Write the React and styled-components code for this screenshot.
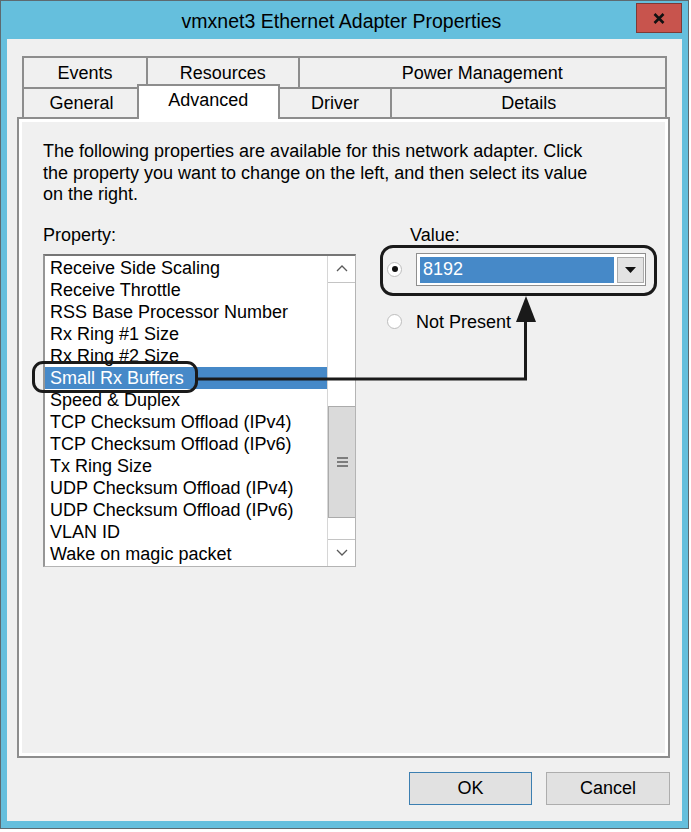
import React from "react";
import styled, { createGlobalStyle } from "styled-components";

const GlobalStyle = createGlobalStyle`
  html, body {
    margin: 0;
    padding: 0;
    background: #ffffff;
  }
  body {
    font-family: "Liberation Sans", Arial, sans-serif;
    color: #000;
  }
`;

const Window = styled.div`
  width: 689px;
  height: 829px;
  box-sizing: border-box;
  border: 1px solid #5d6a70;
  background: #65bfdd;
  padding: 0 6px 7px;
  display: flex;
  flex-direction: column;
`;

const TitleBar = styled.div`
  height: 38px;
  display: grid;
  grid-template-columns: 1fr auto 1fr;
  align-items: start;
`;

const Title = styled.div`
  grid-column: 2;
  font-size: 19.5px;
  line-height: 40px;
  padding-right: 6px;
  white-space: nowrap;
`;

const CloseButton = styled.div`
  grid-column: 3;
  justify-self: end;
  margin-top: 2px;
  width: 46px;
  height: 30px;
  box-sizing: border-box;
  border: 1px solid #7d3a36;
  background: #c8544d;
  display: flex;
  align-items: center;
  justify-content: center;
`;

const Client = styled.div`
  flex: 1;
  background: #f0f0f0;
  padding: 17px 12px 16px 10px;
  display: flex;
  flex-direction: column;
`;

const TabStrip = styled.div`
  margin: 0 3px 0 5px;
  display: flex;
  flex-direction: column;
`;

const TabRow = styled.div`
  display: flex;
  height: ${(p) => p.h}px;
`;

const Tab = styled.div`
  width: ${(p) => p.w}px;
  box-sizing: border-box;
  border-top: 2px solid #8d8d8d;
  border-left: ${(p) => (p.noLeft ? "none" : "2px solid #8d8d8d")};
  border-right: ${(p) => (p.last ? "2px solid #8d8d8d" : "none")};
  background: #f0f0f0;
  font-size: 18px;
  display: flex;
  align-items: center;
  justify-content: center;
  padding-top: 1px;
`;

const ActiveTab = styled.div`
  width: ${(p) => p.w}px;
  height: 35px;
  margin: -3px 0 -2px -2px;
  box-sizing: border-box;
  border: 2px solid #8d8d8d;
  border-bottom: none;
  background: #ffffff;
  position: relative;
  z-index: 2;
  font-size: 18px;
  display: flex;
  justify-content: center;
  padding-top: 4px;
`;

const Panel = styled.div`
  position: relative;
  height: 641px;
  box-sizing: border-box;
  border: 2px solid #8d8d8d;
  box-shadow: inset 0 0 0 3px #ffffff;
  padding: 22px 24px;
`;

const Description = styled.div`
  font-size: 18px;
  line-height: 21.5px;
`;

const Columns = styled.div`
  display: flex;
  margin-top: 18px;
`;

const LeftColumn = styled.div`
  width: 313px;
`;

const RightColumn = styled.div`
  margin-left: 31px;
  display: flex;
  flex-direction: column;
`;

const Label = styled.div`
  font-size: 18px;
  line-height: 22px;
  margin-left: ${(p) => p.indent || 0}px;
  margin-bottom: ${(p) => p.gap}px;
`;

const ListBox = styled.div`
  width: 313px;
  height: 313px;
  box-sizing: border-box;
  border: 1px solid #b4b4b4;
  border-top: 2px solid #767676;
  border-left: 2px solid #969696;
  background: #ffffff;
  display: flex;
`;

const Items = styled.div`
  flex: 1;
  padding-top: 1px;
`;

const Item = styled.div`
  height: 22px;
  line-height: 22px;
  padding-left: 5px;
  font-size: 18px;
  white-space: nowrap;
  background: ${(p) => (p.selected ? "#4689c8" : "transparent")};
  color: ${(p) => (p.selected ? "#ffffff" : "#000000")};
`;

const ScrollBar = styled.div`
  width: 27px;
  border-left: 1px solid #d6d6d6;
  display: flex;
  flex-direction: column;
`;

const ArrowButton = styled.div`
  height: 27px;
  box-sizing: border-box;
  border-top: ${(p) => (p.bottom ? "1px solid #c4c4c4" : "none")};
  border-bottom: ${(p) => (p.bottom ? "none" : "1px solid #c4c4c4")};
  display: flex;
  align-items: center;
  justify-content: center;
`;

const Track = styled.div`
  flex: 1;
  display: flex;
  flex-direction: column;
`;

const Thumb = styled.div`
  margin-top: ${(p) => p.offset}px;
  height: ${(p) => p.size}px;
  box-sizing: border-box;
  border: 1px solid #ababab;
  border-right: none;
  background: #dadada;
  display: flex;
  align-items: center;
  justify-content: center;
`;

const OptionRow = styled.div`
  display: flex;
  align-items: center;
  margin-top: ${(p) => p.top || 0}px;
`;

const Radio = styled.div`
  width: 15px;
  height: 15px;
  box-sizing: border-box;
  border-radius: 50%;
  border: 1px solid #bdbdbd;
  background: #ffffff;
  margin-right: 14px;
  display: flex;
  align-items: center;
  justify-content: center;

  &::after {
    content: "";
    display: ${(p) => (p.checked ? "block" : "none")};
    width: 6px;
    height: 6px;
    border-radius: 50%;
    background: #111111;
  }
`;

const OptionText = styled.div`
  font-size: 18px;
  line-height: 22px;
`;

const Combo = styled.div`
  width: 230px;
  height: 33px;
  box-sizing: border-box;
  border: 1px solid #8f8f8f;
  background: #ffffff;
  padding: 3px 1px 2px 3px;
  display: flex;
  gap: 3px;
`;

const ComboValue = styled.div`
  flex: 1;
  background: #4689c8;
  color: #ffffff;
  font-size: 18px;
  line-height: 25px;
  padding-left: 3px;
`;

const DropButton = styled.div`
  width: 27px;
  box-sizing: border-box;
  border: 1px solid #acacac;
  background: #e3e3e3;
  display: flex;
  align-items: center;
  justify-content: center;
`;

const Callout = styled.div`
  position: absolute;
  left: ${(p) => p.x}px;
  top: ${(p) => p.y}px;
  width: ${(p) => p.w}px;
  height: ${(p) => p.h}px;
  box-sizing: border-box;
  border: 3px solid #1a1a1a;
  border-radius: ${(p) => p.r}px;
  pointer-events: none;
`;

const Connector = styled.svg`
  position: absolute;
  left: 177px;
  top: 175px;
`;

const ButtonRow = styled.div`
  display: flex;
  justify-content: flex-end;
  gap: 14px;
  margin-top: 14px;
`;

const Button = styled.div`
  width: ${(p) => p.w}px;
  height: 33px;
  box-sizing: border-box;
  border: 1px solid ${(p) => (p.primary ? "#3c7fb1" : "#adadad")};
  background: #e1e1e1;
  font-size: 18px;
  display: flex;
  align-items: center;
  justify-content: center;
`;

const properties = [
  "Receive Side Scaling",
  "Receive Throttle",
  "RSS Base Processor Number",
  "Rx Ring #1 Size",
  "Rx Ring #2 Size",
  "Small Rx Buffers",
  "Speed & Duplex",
  "TCP Checksum Offload (IPv4)",
  "TCP Checksum Offload (IPv6)",
  "Tx Ring Size",
  "UDP Checksum Offload (IPv4)",
  "UDP Checksum Offload (IPv6)",
  "VLAN ID",
  "Wake on magic packet",
];

function Chevron({ down }) {
  return (
    <svg width="12" height="7" viewBox="0 0 12 7">
      <polyline
        points={down ? "1,1 6,6 11,1" : "1,6 6,1 11,6"}
        fill="none"
        stroke="#5a5a5a"
        strokeWidth="1.3"
      />
    </svg>
  );
}

export default function App() {
  return (
    <>
      <GlobalStyle />
      <Window>
        <TitleBar>
          <Title>vmxnet3 Ethernet Adapter Properties</Title>
          <CloseButton>
            <svg width="12" height="11" viewBox="0 0 12 11">
              <path d="M1.5 1 L10.5 10 M10.5 1 L1.5 10" stroke="#111" strokeWidth="2.6" />
            </svg>
          </CloseButton>
        </TitleBar>

        <Client>
          <TabStrip>
            <TabRow h={31}>
              <Tab w={124}>Events</Tab>
              <Tab w={152}>Resources</Tab>
              <Tab w={370} last>Power Management</Tab>
            </TabRow>
            <TabRow h={30}>
              <Tab w={117}>General</Tab>
              <ActiveTab w={143}>Advanced</ActiveTab>
              <Tab w={111} noLeft>Driver</Tab>
              <Tab w={277} last>Details</Tab>
            </TabRow>
          </TabStrip>

          <Panel>
            <Description>
              The following properties are available for this network adapter. Click
              <br />
              the property you want to change on the left, and then select its value
              <br />
              on the right.
            </Description>

            <Columns>
              <LeftColumn>
                <Label gap={8}>Property:</Label>
                <ListBox>
                  <Items>
                    {properties.map((name) => (
                      <Item key={name} selected={name === "Small Rx Buffers"}>
                        {name}
                      </Item>
                    ))}
                  </Items>
                  <ScrollBar>
                    <ArrowButton>
                      <Chevron />
                    </ArrowButton>
                    <Track>
                      <Thumb offset={123} size={112}>
                        <svg width="11" height="10" viewBox="0 0 11 10">
                          <path d="M0 1 H11 M0 5 H11 M0 9 H11" stroke="#5f5f5f" strokeWidth="1.6" />
                        </svg>
                      </Thumb>
                    </Track>
                    <ArrowButton bottom>
                      <Chevron down />
                    </ArrowButton>
                  </ScrollBar>
                </ListBox>
              </LeftColumn>

              <RightColumn>
                <Label indent={23} gap={7}>Value:</Label>
                <OptionRow>
                  <Radio checked />
                  <Combo>
                    <ComboValue>8192</ComboValue>
                    <DropButton>
                      <svg width="11" height="6" viewBox="0 0 11 6">
                        <path d="M0 0 H11 L5.5 6 Z" fill="#111" />
                      </svg>
                    </DropButton>
                  </Combo>
                </OptionRow>
                <OptionRow top={25}>
                  <Radio />
                  <OptionText>Not Present</OptionText>
                </OptionRow>
              </RightColumn>
            </Columns>

            <Callout x={13} y={242} w={166} h={32} r={11} />
            <Callout x={361} y={126} w={277} h={51} r={13} />
            <Connector width="344" height="90" viewBox="0 0 344 90">
              <polyline
                points="0,85 329.5,85 329.5,26"
                fill="none"
                stroke="#1a1a1a"
                strokeWidth="3"
              />
              <polygon points="330,2 320,28 340,28" fill="#1a1a1a" />
            </Connector>
          </Panel>

          <ButtonRow>
            <Button w={123} primary>OK</Button>
            <Button w={124}>Cancel</Button>
          </ButtonRow>
        </Client>
      </Window>
    </>
  );
}
